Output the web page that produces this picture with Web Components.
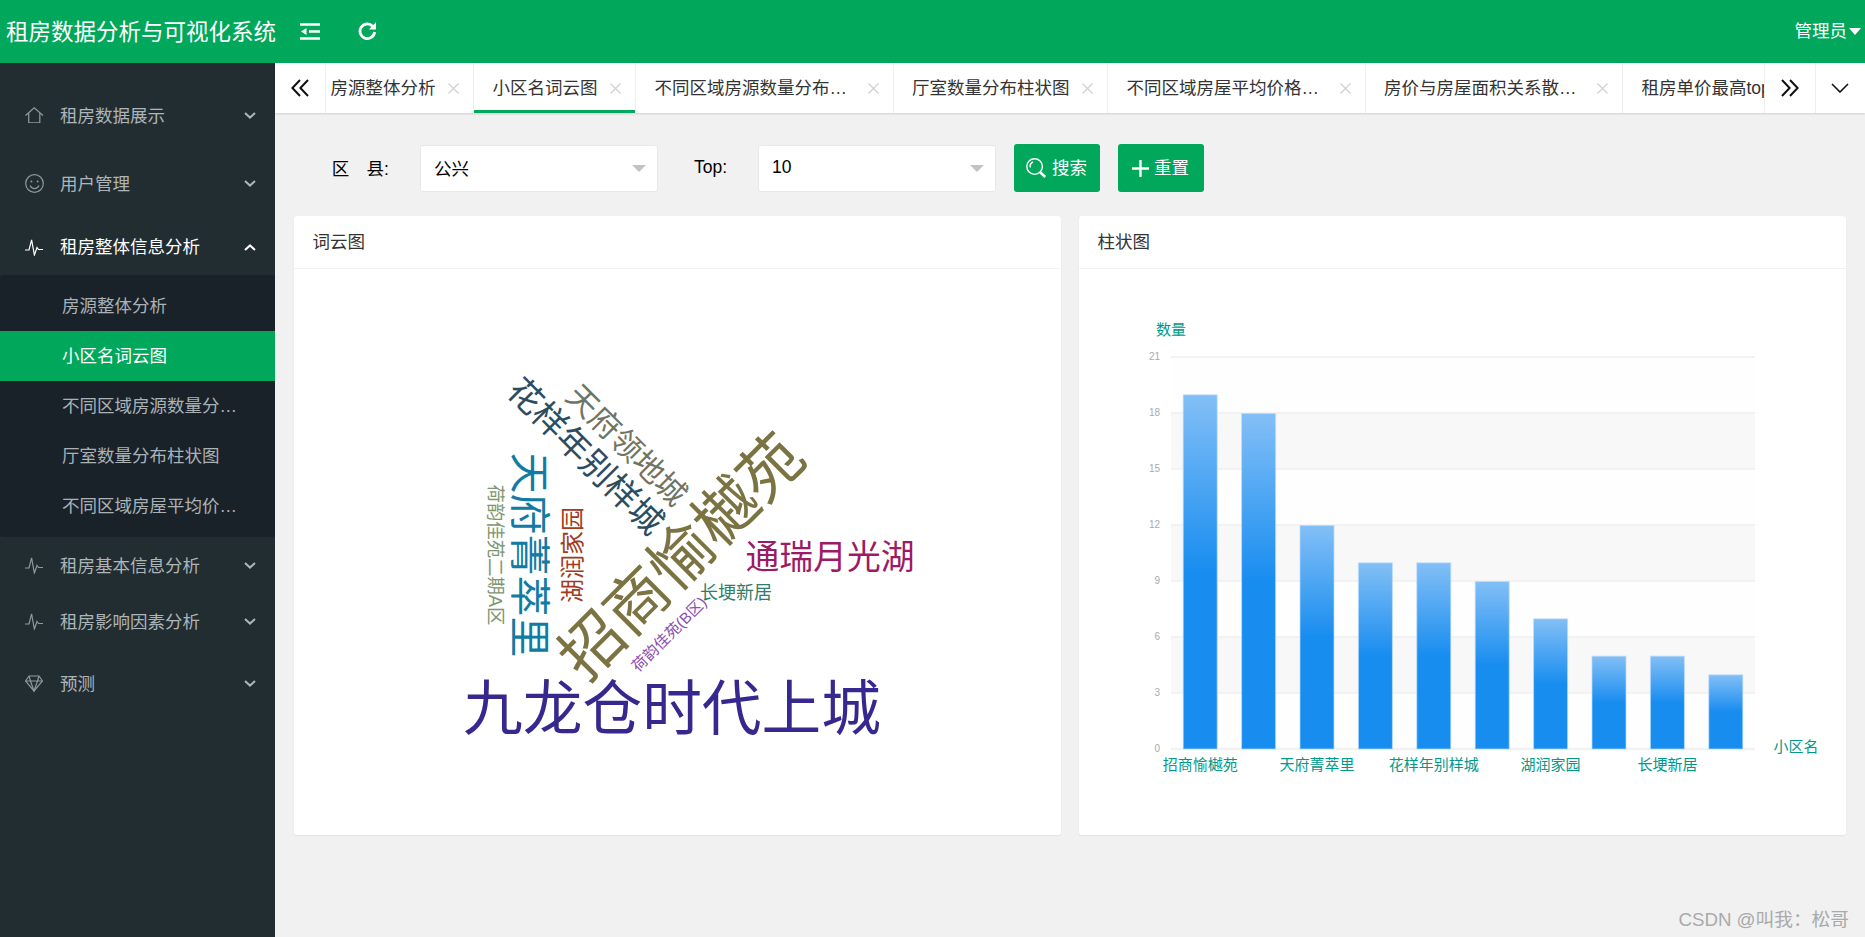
<!DOCTYPE html>
<html lang="zh">
<head>
<meta charset="utf-8">
<title>租房数据分析与可视化系统</title>
<style>
  html, body { margin: 0; height: 100%; overflow: hidden; }
  body {
    font: 17.5px "Liberation Sans", "Noto Sans CJK SC", sans-serif;
    color: #333;
    background: #f1f1f1;
  }
</style>
</head>
<body>
<rent-app>
  <app-header slot="header" title="租房数据分析与可视化系统" user="管理员"></app-header>

  <side-nav slot="nav">
    <nav-item icon="home" label="租房数据展示" style="margin-top:24px"></nav-item>
    <nav-item icon="smile" label="用户管理" style="margin-top:12px"></nav-item>
    <nav-item icon="pulse" label="租房整体信息分析" open style="margin-top:8px">
      <nav-sub>房源整体分析</nav-sub>
      <nav-sub active>小区名词云图</nav-sub>
      <nav-sub>不同区域房源数量分…</nav-sub>
      <nav-sub>厅室数量分布柱状图</nav-sub>
      <nav-sub>不同区域房屋平均价…</nav-sub>
    </nav-item>
    <nav-item icon="pulse" label="租房基本信息分析"></nav-item>
    <nav-item icon="pulse" label="租房影响因素分析"></nav-item>
    <nav-item icon="diamond" label="预测" style="margin-top:6px"></nav-item>
  </side-nav>

  <div slot="main" style="min-width:0">
    <tab-bar>
      <tab-item style="--pad-left:4.5px">房源整体分析</tab-item>
      <tab-item active>小区名词云图</tab-item>
      <tab-item style="--text-w:200.5px">不同区域房源数量分布…</tab-item>
      <tab-item>厅室数量分布柱状图</tab-item>
      <tab-item style="--text-w:200.5px">不同区域房屋平均价格…</tab-item>
      <tab-item style="--text-w:200.5px">房价与房屋面积关系散…</tab-item>
      <tab-item>租房单价最高top</tab-item>
    </tab-bar>

    <filter-row>
      <filter-select label="区&#12288;县:" value="公兴" style="--label-w:126px"></filter-select>
      <filter-select label="Top:" value="10" style="--label-w:100.5px"></filter-select>
      <action-button icon="search">搜索</action-button>
      <action-button icon="plus">重置</action-button>
    </filter-row>

    <card-row>
      <panel-card title="词云图"><word-cloud></word-cloud></panel-card>
      <panel-card title="柱状图"><bar-chart></bar-chart></panel-card>
    </card-row>
  </div>

  <water-mark slot="mark">CSDN @叫我：松哥</water-mark>
</rent-app>

<script>
  const ICONS = {
    home: '<svg width="18.5" height="16.5" viewBox="0 0 18 16" fill="none" stroke="currentColor" stroke-width="1.2"><path d="M.5 8.2 9 .8l8.5 7.4M3.6 6V15.4h10.8V6"/></svg>',
    smile: '<svg width="19" height="19" viewBox="0 0 19 19" fill="none" stroke="currentColor" stroke-width="1.2"><circle cx="9.5" cy="9.5" r="8.8"/><circle cx="6.4" cy="7.4" r="1" fill="currentColor" stroke="none"/><circle cx="12.6" cy="7.4" r="1" fill="currentColor" stroke="none"/><path d="M5 11.6c1 2.2 2.8 3 4.5 3s3.5-.8 4.5-3"/></svg>',
    pulse: '<svg width="18" height="17" viewBox="0 0 18 17" fill="none" stroke="currentColor" stroke-width="1.2"><path d="M0 11H4L6.6 .8 9.4 16 12 8.5l1.5 2H18"/></svg>',
    diamond: '<svg width="18" height="17" viewBox="0 0 18 17" fill="none" stroke="currentColor" stroke-width="1.2"><path d="M4 1h10l3.5 5L9 16 .5 6z"/><path d="M.5 6h17M5.5 6 9 16l3.5-10M4 1l1.5 5M14 1l-1.5 5"/></svg>',
    chevronDown: '<svg width="12" height="7" viewBox="0 0 12 7" fill="none" stroke="currentColor" stroke-width="2"><path d="M1 1l5 4.6L11 1"/></svg>',
    chevronUp: '<svg width="12" height="7" viewBox="0 0 12 7" fill="none" stroke="currentColor" stroke-width="2"><path d="M1 6l5-4.6L11 6"/></svg>',
    fold: '<svg width="20" height="17" viewBox="0 0 20 17" fill="#fff" stroke="#fff" stroke-width="2.4"><path d="M0 1.5h20M0 15.5h20M9 8.5h11"/><path d="M1 8.5 6.5 5v7z" stroke="none"/></svg>',
    refresh: '<svg width="19" height="18" viewBox="0 0 19 18" fill="none" stroke="#fff" stroke-width="2.8"><path d="M14.6 4.2A7.3 7.3 0 1 0 16.6 10"/><path d="M18 .2V7.4H10.8z" fill="#fff" stroke="none"/></svg>',
    left2: '<svg width="18" height="18" viewBox="0 0 18 18" fill="none" stroke="#111" stroke-width="2"><path d="M9 1 1.4 9 9 17M17 1 9.4 9 17 17"/></svg>',
    right2: '<svg width="18" height="18" viewBox="0 0 18 18" fill="none" stroke="#111" stroke-width="2"><path d="M1 1l7.6 8L1 17M9 1l7.6 8L9 17"/></svg>',
    down: '<svg width="18" height="10" viewBox="0 0 18 10" fill="none" stroke="#111" stroke-width="1.6"><path d="M1 1l8 8 8-8"/></svg>',
    close: '<svg width="11" height="11" viewBox="0 0 11 11" fill="none" stroke="#cfcfcf" stroke-width="1.2"><path d="M.5.5l10 10M10.5.5l-10 10"/></svg>',
    search: '<svg width="21" height="20" viewBox="0 0 21 20" fill="none" stroke="#fff" stroke-width="1.4"><circle cx="8.6" cy="8.6" r="7.8"/><path d="M4.2 9.5C3.8 7 5 4.8 7 4"/><path d="M14.2 14.2l5 4.8" stroke-width="2.6"/></svg>',
    plus: '<svg width="17" height="17" viewBox="0 0 17 17" fill="none" stroke="#fff" stroke-width="2.4"><path d="M8.5 0v17M0 8.5h17"/></svg>'
  };

  class RentApp extends HTMLElement {
    connectedCallback() {
      this.attachShadow({mode: 'open'}).innerHTML = `
        <style>
          :host {
            display: grid;
            position: relative;
            grid-template: 63px minmax(0, 1fr) / 275px minmax(0, 1fr);
            height: 100vh;
            overflow: hidden;
          }
          .top { grid-column: 1 / 3; }
        </style>
        <div class="top"><slot name="header"></slot></div>
        <slot name="nav"></slot>
        <slot name="main"></slot>
        <slot name="mark"></slot>`;
    }
  }

  class AppHeader extends HTMLElement {
    connectedCallback() {
      this.attachShadow({mode: 'open'}).innerHTML = `
        <style>
          :host {
            display: flex;
            align-items: center;
            height: 63px;
            background: #01a75b;
            color: #fff;
          }
          h1 {
            width: 269px;
            margin: 0 0 3px 6px;
            font-size: 22.5px;
            font-weight: normal;
            white-space: nowrap;
          }
          .ico { display: flex; margin-left: 25px; margin-top: -1px; }
          .ico + .ico { margin-left: 38px; }
          .user { margin-left: auto; display: flex; align-items: center; padding-right: 4px; }
          .name { margin-bottom: 4px; }
          .caret {
            margin: 0 0 0 2px;
            border: solid transparent;
            border-width: 7px 6.5px 0;
            border-top-color: #fff;
          }
        </style>
        <h1>${this.getAttribute('title')}</h1>
        <span class="ico">${ICONS.fold}</span>
        <span class="ico">${ICONS.refresh}</span>
        <span class="user"><span class="name">${this.getAttribute('user')}</span><span class="caret"></span></span>`;
    }
  }

  class SideNav extends HTMLElement {
    connectedCallback() {
      this.attachShadow({mode: 'open'}).innerHTML = `
        <style>
          :host { display: block; background: #222d32; overflow: hidden; }
        </style>
        <slot></slot>`;
    }
  }

  class NavItem extends HTMLElement {
    connectedCallback() {
      const open = this.hasAttribute('open');
      this.attachShadow({mode: 'open'}).innerHTML = `
        <style>
          :host { display: block; }
          .row {
            display: flex;
            align-items: center;
            height: 56px;
            padding: 0 19px 0 25px;
            color: ${open ? '#fff' : '#aeb5b8'};
          }
          .ico { display: flex; width: 35px; color: ${open ? '#fff' : '#8f999d'}; }
          .txt { flex: 1; padding-bottom: ${open ? 4 : 2}px; }
          .arrow { display: flex; color: ${open ? '#fff' : '#aeb5b8'}; }
          .sub { padding: 6px 0; background: #1a2229; border-radius: 3px; }
        </style>
        <div class="row">
          <span class="ico">${ICONS[this.getAttribute('icon')]}</span>
          <span class="txt">${this.getAttribute('label')}</span>
          <span class="arrow">${open ? ICONS.chevronUp : ICONS.chevronDown}</span>
        </div>
        ${open ? '<div class="sub"><slot></slot></div>' : ''}`;
    }
  }

  class NavSub extends HTMLElement {
    connectedCallback() {
      this.attachShadow({mode: 'open'}).innerHTML = `
        <style>
          :host {
            display: block;
            height: 50px;
            line-height: 50px;
            padding-left: 62px;
            color: #aab2b6;
            white-space: nowrap;
          }
          :host([active]) { background: #01a75b; color: #fff; }
        </style>
        <slot></slot>`;
    }
  }

  class TabBar extends HTMLElement {
    connectedCallback() {
      this.attachShadow({mode: 'open'}).innerHTML = `
        <style>
          :host {
            display: flex;
            height: 50px;
            background: #fff;
            box-shadow: 0 1px 2px rgba(0,0,0,.14);
            position: relative;
          }
          .btn {
            flex: none;
            display: flex;
            align-items: center;
            justify-content: center;
            box-sizing: border-box;
            width: 51px;
            border-right: 1px solid #eee;
          }
          .btn.r { border-left: 1px solid #eee; border-right: 0; }
          .btn.end { width: 50px; border-left: 0; box-shadow: inset 1px 0 0 #eee; }
          .tabs { flex: 1; min-width: 0; display: flex; overflow: hidden; }
        </style>
        <span class="btn">${ICONS.left2}</span>
        <div class="tabs"><slot></slot></div>
        <span class="btn r">${ICONS.right2}</span>
        <span class="btn r end">${ICONS.down}</span>`;
    }
  }

  class TabItem extends HTMLElement {
    connectedCallback() {
      this.attachShadow({mode: 'open'}).innerHTML = `
        <style>
          :host {
            flex: none;
            display: flex;
            align-items: center;
            box-sizing: border-box;
            height: 50px;
            padding: 0 14px 0 var(--pad-left, 18.5px);
            border-right: 1px solid #eee;
            color: #333;
            white-space: nowrap;
          }
          :host([active]) { box-shadow: inset 0 -3px 0 #01a75b; }
          .txt { width: var(--text-w, auto); padding-bottom: 3px; }
          .x { display: flex; margin-left: 12.5px; }
        </style>
        <span class="txt"><slot></slot></span><span class="x">${ICONS.close}</span>`;
    }
  }

  class FilterRow extends HTMLElement {
    connectedCallback() {
      this.attachShadow({mode: 'open'}).innerHTML = `
        <style>
          :host {
            display: flex;
            align-items: center;
            height: 48px;
            padding: 31px 19px 24px;
          }
        </style>
        <slot></slot>`;
    }
  }

  class FilterSelect extends HTMLElement {
    connectedCallback() {
      this.attachShadow({mode: 'open'}).innerHTML = `
        <style>
          :host { display: flex; align-items: center; color: #000; }
          label {
            box-sizing: border-box;
            width: var(--label-w);
            padding: 0 31px 2px 0;
            text-align: right;
            white-space: nowrap;
          }
          .box {
            display: flex;
            align-items: center;
            justify-content: space-between;
            box-sizing: border-box;
            width: 237.5px;
            height: 47px;
            padding: 0 11px 0 13px;
            background: #fff;
            border: 1px solid #e8e8e8;
            border-radius: 3px;
          }
          .val { padding-bottom: 2px; }
          .arrow {
            border: solid transparent;
            border-width: 7.5px 7px 0;
            border-top-color: #c2c2c2;
          }
        </style>
        <label>${this.getAttribute('label')}</label>
        <div class="box"><span class="val">${this.getAttribute('value')}</span><span class="arrow"></span></div>`;
    }
  }

  class ActionButton extends HTMLElement {
    connectedCallback() {
      this.attachShadow({mode: 'open'}).innerHTML = `
        <style>
          :host {
            display: flex;
            align-items: center;
            justify-content: center;
            gap: 5px;
            box-sizing: border-box;
            width: 86px;
            height: 48px;
            margin-left: 18px;
            background: #01a75b;
            color: #fff;
            border-radius: 3px;
            cursor: pointer;
          }
          .ico { display: flex; }
          .txt { padding-bottom: 3px; }
        </style>
        <span class="ico">${ICONS[this.getAttribute('icon')]}</span><span class="txt"><slot></slot></span>`;
    }
  }

  class CardRow extends HTMLElement {
    connectedCallback() {
      this.attachShadow({mode: 'open'}).innerHTML = `
        <style>
          :host { display: flex; gap: 18px; padding: 0 19px; }
        </style>
        <slot></slot>`;
    }
  }

  class PanelCard extends HTMLElement {
    connectedCallback() {
      this.attachShadow({mode: 'open'}).innerHTML = `
        <style>
          :host {
            display: block;
            flex: 1;
            min-width: 0;
            height: 619px;
            background: #fff;
            border-radius: 3px;
            box-shadow: 0 1px 2px rgba(0,0,0,.06);
          }
          header {
            height: 52px;
            line-height: 52px;
            padding-left: 18.5px;
            border-bottom: 1px solid #f2f2f2;
            color: #333;
          }
        </style>
        <header>${this.getAttribute('title')}</header>
        <slot></slot>`;
    }
  }

  class WordCloud extends HTMLElement {
    connectedCallback() {
      // word, centre x, centre y, size, rotation, colour: page coordinates of the cloud
      const words = [
        ['九龙仓时代上城', 672, 708, 59.7, 0, '#36288e'],
        ['招商愉樾苑', 681, 556, 63, -45, '#7b7342'],
        ['花样年别样城', 586, 456, 34, 45, '#2d4d5f'],
        ['天府领地城', 627, 445, 31, 45, '#6f7564'],
        ['天府菁萃里', 530, 555, 41, 90, '#127ba3'],
        ['荷韵佳苑二期A区', 496, 555, 18.4, 90, '#7e9671'],
        ['湖润家园', 572, 555, 24, -90, '#a23a1e'],
        ['通瑞月光湖', 830, 557, 33.8, 0, '#9c1a66'],
        ['长埂新居', 736, 592.5, 18, 0, '#2f7d6a'],
        ['荷韵佳苑(B区)', 669, 634, 15.5, -45, '#8a4fb0']
      ];
      const texts = words.map(([t, x, y, size, rot, color]) =>
        `<text transform="translate(${x} ${y}) rotate(${rot})" dy=".36em" font-size="${size}" fill="${color}" text-anchor="middle">${t}</text>`).join('');
      this.attachShadow({mode: 'open'}).innerHTML = `
        <style>:host { display: block; } svg { display: block; }</style>
        <svg width="767" height="566" viewBox="294 269 767 566">${texts}</svg>`;
    }
  }

  class BarChart extends HTMLElement {
    connectedCallback() {
      const names = ['招商愉樾苑', '', '天府菁萃里', '', '花样年别样城', '', '湖润家园', '', '长埂新居', ''];
      const data = [19, 18, 12, 10, 10, 9, 7, 5, 5, 4];
      const left = 1171, right = 1755, base = 749, unit = 56 / 3;
      const step = (right - left) / data.length;
      let out = '';
      // alternating bands, then grid lines with tick labels
      for (let v = 0; v < 21; v += 3) {
        const y = base - (v + 3) * unit;
        out += `<rect x="${left}" y="${y}" width="${right - left}" height="56" fill="${v / 3 % 2 ? '#f8f8f8' : '#fefefe'}"/>`;
      }
      for (let v = 0; v <= 21; v += 3) {
        const y = base - v * unit;
        out += `<path d="M${left} ${y}H${right}" stroke="${v ? '#efefef' : '#f2f2f2'}" stroke-width="${v ? 1.5 : 2.5}"/>`;
        out += `<text x="1160" y="${y + 3}" font-size="10" fill="#aaa" text-anchor="end">${v}</text>`;
      }
      data.forEach((d, i) => {
        const h = d * unit, x = left + step * i + (step - 35) / 2;
        out += `<rect x="${x + .5}" y="${base - h + .5}" width="34" height="${h - .5}" fill="url(#barFill)" stroke="#bcdcfb" stroke-opacity=".7"/>`;
        if (names[i]) out += `<text x="${x + 17.5}" y="770" font-size="15" fill="#00998a" text-anchor="middle">${names[i]}</text>`;
      });
      this.attachShadow({mode: 'open'}).innerHTML = `
        <style>:host { display: block; } svg { display: block; }</style>
        <svg width="767" height="566" viewBox="1079 269 767 566">
          <defs>
            <linearGradient id="barFill" x1="0" y1="0" x2="0" y2="1">
              <stop offset="0" stop-color="#83bff6"/>
              <stop offset=".5" stop-color="#188df0"/>
              <stop offset="1" stop-color="#188df0"/>
            </linearGradient>
          </defs>
          ${out}
          <text x="1171" y="335" font-size="15" fill="#00998a" text-anchor="middle">数量</text>
          <text x="1796" y="752" font-size="15" fill="#00998a" text-anchor="middle">小区名</text>
        </svg>`;
    }
  }

  class WaterMark extends HTMLElement {
    connectedCallback() {
      this.attachShadow({mode: 'open'}).innerHTML = `
        <style>
          :host {
            position: absolute;
            right: 16px;
            bottom: 6px;
            font-size: 18.7px;
            color: #aaa;
            white-space: nowrap;
          }
        </style>
        <slot></slot>`;
    }
  }

  customElements.define('rent-app', RentApp);
  customElements.define('app-header', AppHeader);
  customElements.define('side-nav', SideNav);
  customElements.define('nav-item', NavItem);
  customElements.define('nav-sub', NavSub);
  customElements.define('tab-bar', TabBar);
  customElements.define('tab-item', TabItem);
  customElements.define('filter-row', FilterRow);
  customElements.define('filter-select', FilterSelect);
  customElements.define('action-button', ActionButton);
  customElements.define('card-row', CardRow);
  customElements.define('panel-card', PanelCard);
  customElements.define('word-cloud', WordCloud);
  customElements.define('bar-chart', BarChart);
  customElements.define('water-mark', WaterMark);
</script>
</body>
</html>
